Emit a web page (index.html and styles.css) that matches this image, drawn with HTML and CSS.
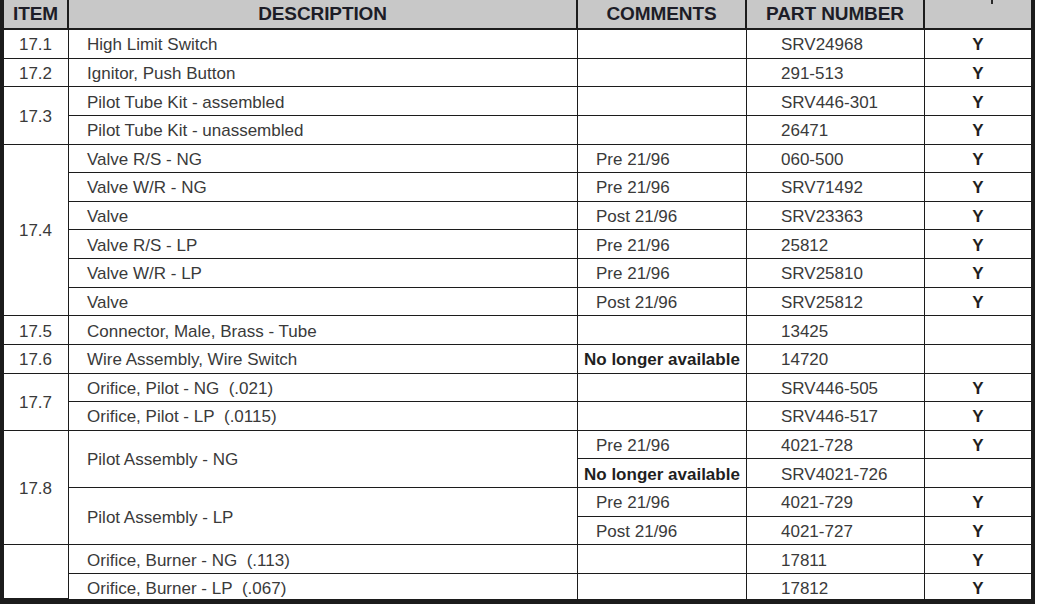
FILE: index.html
```html
<!DOCTYPE html>
<html>
<head>
<meta charset="utf-8">
<link rel="stylesheet" href="styles.css">
</head>
<body>
<div class="parts">
  <div class="hd">ITEM</div>
  <div class="hd">DESCRIPTION</div>
  <div class="hd">COMMENTS</div>
  <div class="hd">PART NUMBER</div>
  <div class="hd hd-last"><span class="stub"></span></div>

  <div class="c item">17.1</div><div class="c desc">High Limit Switch</div><div class="c cm"></div><div class="c pn">SRV24968</div><div class="c y">Y</div>
  <div class="c item">17.2</div><div class="c desc">Ignitor, Push Button</div><div class="c cm"></div><div class="c pn">291-513</div><div class="c y">Y</div>

  <div class="c item span2">17.3</div><div class="c desc">Pilot Tube Kit - assembled</div><div class="c cm"></div><div class="c pn">SRV446-301</div><div class="c y">Y</div>
  <div class="c desc">Pilot Tube Kit - unassembled</div><div class="c cm"></div><div class="c pn">26471</div><div class="c y">Y</div>

  <div class="c item span6">17.4</div><div class="c desc">Valve R/S - NG</div><div class="c cm">Pre 21/96</div><div class="c pn">060-500</div><div class="c y">Y</div>
  <div class="c desc">Valve W/R - NG</div><div class="c cm">Pre 21/96</div><div class="c pn">SRV71492</div><div class="c y">Y</div>
  <div class="c desc">Valve</div><div class="c cm">Post 21/96</div><div class="c pn">SRV23363</div><div class="c y">Y</div>
  <div class="c desc">Valve R/S - LP</div><div class="c cm">Pre 21/96</div><div class="c pn">25812</div><div class="c y">Y</div>
  <div class="c desc">Valve W/R - LP</div><div class="c cm">Pre 21/96</div><div class="c pn">SRV25810</div><div class="c y">Y</div>
  <div class="c desc">Valve</div><div class="c cm">Post 21/96</div><div class="c pn">SRV25812</div><div class="c y">Y</div>

  <div class="c item">17.5</div><div class="c desc">Connector, Male, Brass - Tube</div><div class="c cm"></div><div class="c pn">13425</div><div class="c y"></div>
  <div class="c item">17.6</div><div class="c desc">Wire Assembly, Wire Switch</div><div class="c cm na">No longer available</div><div class="c pn">14720</div><div class="c y"></div>

  <div class="c item span2">17.7</div><div class="c desc">Orifice, Pilot - NG&nbsp; (.021)</div><div class="c cm"></div><div class="c pn">SRV446-505</div><div class="c y">Y</div>
  <div class="c desc">Orifice, Pilot - LP&nbsp; (.0115)</div><div class="c cm"></div><div class="c pn">SRV446-517</div><div class="c y">Y</div>

  <div class="c item span4">17.8</div><div class="c desc span2">Pilot Assembly - NG</div><div class="c cm">Pre 21/96</div><div class="c pn">4021-728</div><div class="c y">Y</div>
  <div class="c cm na">No longer available</div><div class="c pn">SRV4021-726</div><div class="c y"></div>
  <div class="c desc span2">Pilot Assembly - LP</div><div class="c cm">Pre 21/96</div><div class="c pn">4021-729</div><div class="c y">Y</div>
  <div class="c cm">Post 21/96</div><div class="c pn">4021-727</div><div class="c y">Y</div>

  <div class="c item span2"></div><div class="c desc">Orifice, Burner - NG&nbsp; (.113)</div><div class="c cm"></div><div class="c pn">17811</div><div class="c y">Y</div>
  <div class="c desc last">Orifice, Burner - LP&nbsp; (.067)</div><div class="c cm last"></div><div class="c pn last">17812</div><div class="c y last">Y</div>
</div>
</body>
</html>
```
FILE: styles.css
```css
html, body {
  margin: 0;
  padding: 0;
  background: #ffffff;
}

body {
  font-family: "Liberation Sans", Arial, sans-serif;
  color: #3a3a3a;
}

.parts {
  display: grid;
  grid-template-columns: 65px 509px 169px 178px 106px;
  grid-template-rows: 30px repeat(19, 28.63px) 25px;
  width: 1027px;
  border-left: 4px solid #1c1c1c;
  border-right: 4px solid #1c1c1c;
  border-bottom: 5px solid #1c1c1c;
  background: #ffffff;
}

.hd {
  display: flex;
  align-items: center;
  justify-content: center;
  background: #c8c8c8;
  border-right: 3px solid #1c1c1c;
  border-bottom: 2px solid #1c1c1c;
  margin-right: -1px;
  z-index: 1;
  font-weight: bold;
  font-size: 19px;
  letter-spacing: -0.1px;
  color: #1d1d27;
  padding-bottom: 1px;
  box-sizing: border-box;
}

.hd-last {
  border-right: none;
  margin-right: 0;
  align-items: flex-start;
}

.stub {
  display: block;
  width: 2px;
  height: 4px;
  background: #2a2a2a;
  margin-left: 27px;
}

.c {
  display: flex;
  align-items: center;
  border-right: 1px solid #1c1c1c;
  border-bottom: 1px solid #1c1c1c;
  font-size: 17px;
  white-space: nowrap;
  box-sizing: border-box;
  padding-top: 3px;
}

.c.last {
  padding-top: 6px;
  border-bottom: none;
}

.item {
  justify-content: center;
  padding-right: 1px;
}

.desc {
  padding-left: 18px;
}

.cm {
  padding-left: 18px;
}

.cm.na {
  padding-left: 6px;
  font-weight: bold;
  color: #1f1f1f;
}

.pn {
  padding-left: 34px;
}

.y {
  justify-content: center;
  border-right: none;
  font-weight: bold;
  color: #1f1f1f;
}

.span2 {
  grid-row: span 2;
}

.span4 {
  grid-row: span 4;
}

.span6 {
  grid-row: span 6;
}
```
